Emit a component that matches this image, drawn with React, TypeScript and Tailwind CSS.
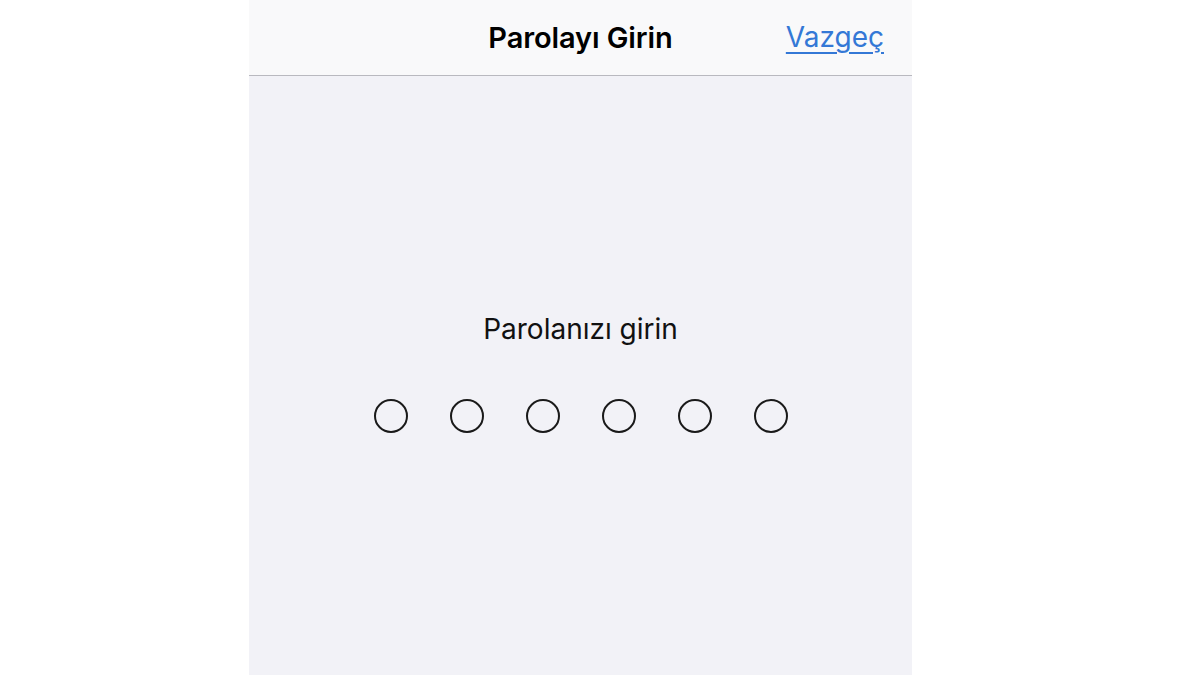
import React from 'react';

export default function App() {
  const slots = [0, 1, 2, 3, 4, 5];

  return (
    <div className="w-[1200px] h-[675px] bg-white flex pl-[249px] overflow-hidden" style={{ fontFamily: 'Inter, "Noto Sans", sans-serif' }}>
      <div className="w-[663px] h-full bg-[#f2f2f7] flex flex-col">
        <header className="h-[76px] shrink-0 bg-[#f9f9fa] border-b border-[#b9b9bf] relative flex items-center justify-center">
          <h1 className="text-[29px] font-semibold text-black tracking-[-0.1px]">Parolayı Girin</h1>
          <a href="#" className="absolute right-[28px] top-[16px] text-[28px] text-[#3478d6] underline underline-offset-[5px] decoration-[2px]">
            Vazgeç
          </a>
        </header>

        <div className="flex flex-col items-center pt-[239px]">
          <p className="text-[28px] text-[#111] leading-none">Parolanızı girin</p>
          <div className="flex gap-[42px] mt-[56px]">
            {slots.map((i) => (
              <div key={i} className="w-[34px] h-[34px] rounded-full border-2 border-[#1a1a1a]" />
            ))}
          </div>
        </div>
      </div>
    </div>
  );
}
